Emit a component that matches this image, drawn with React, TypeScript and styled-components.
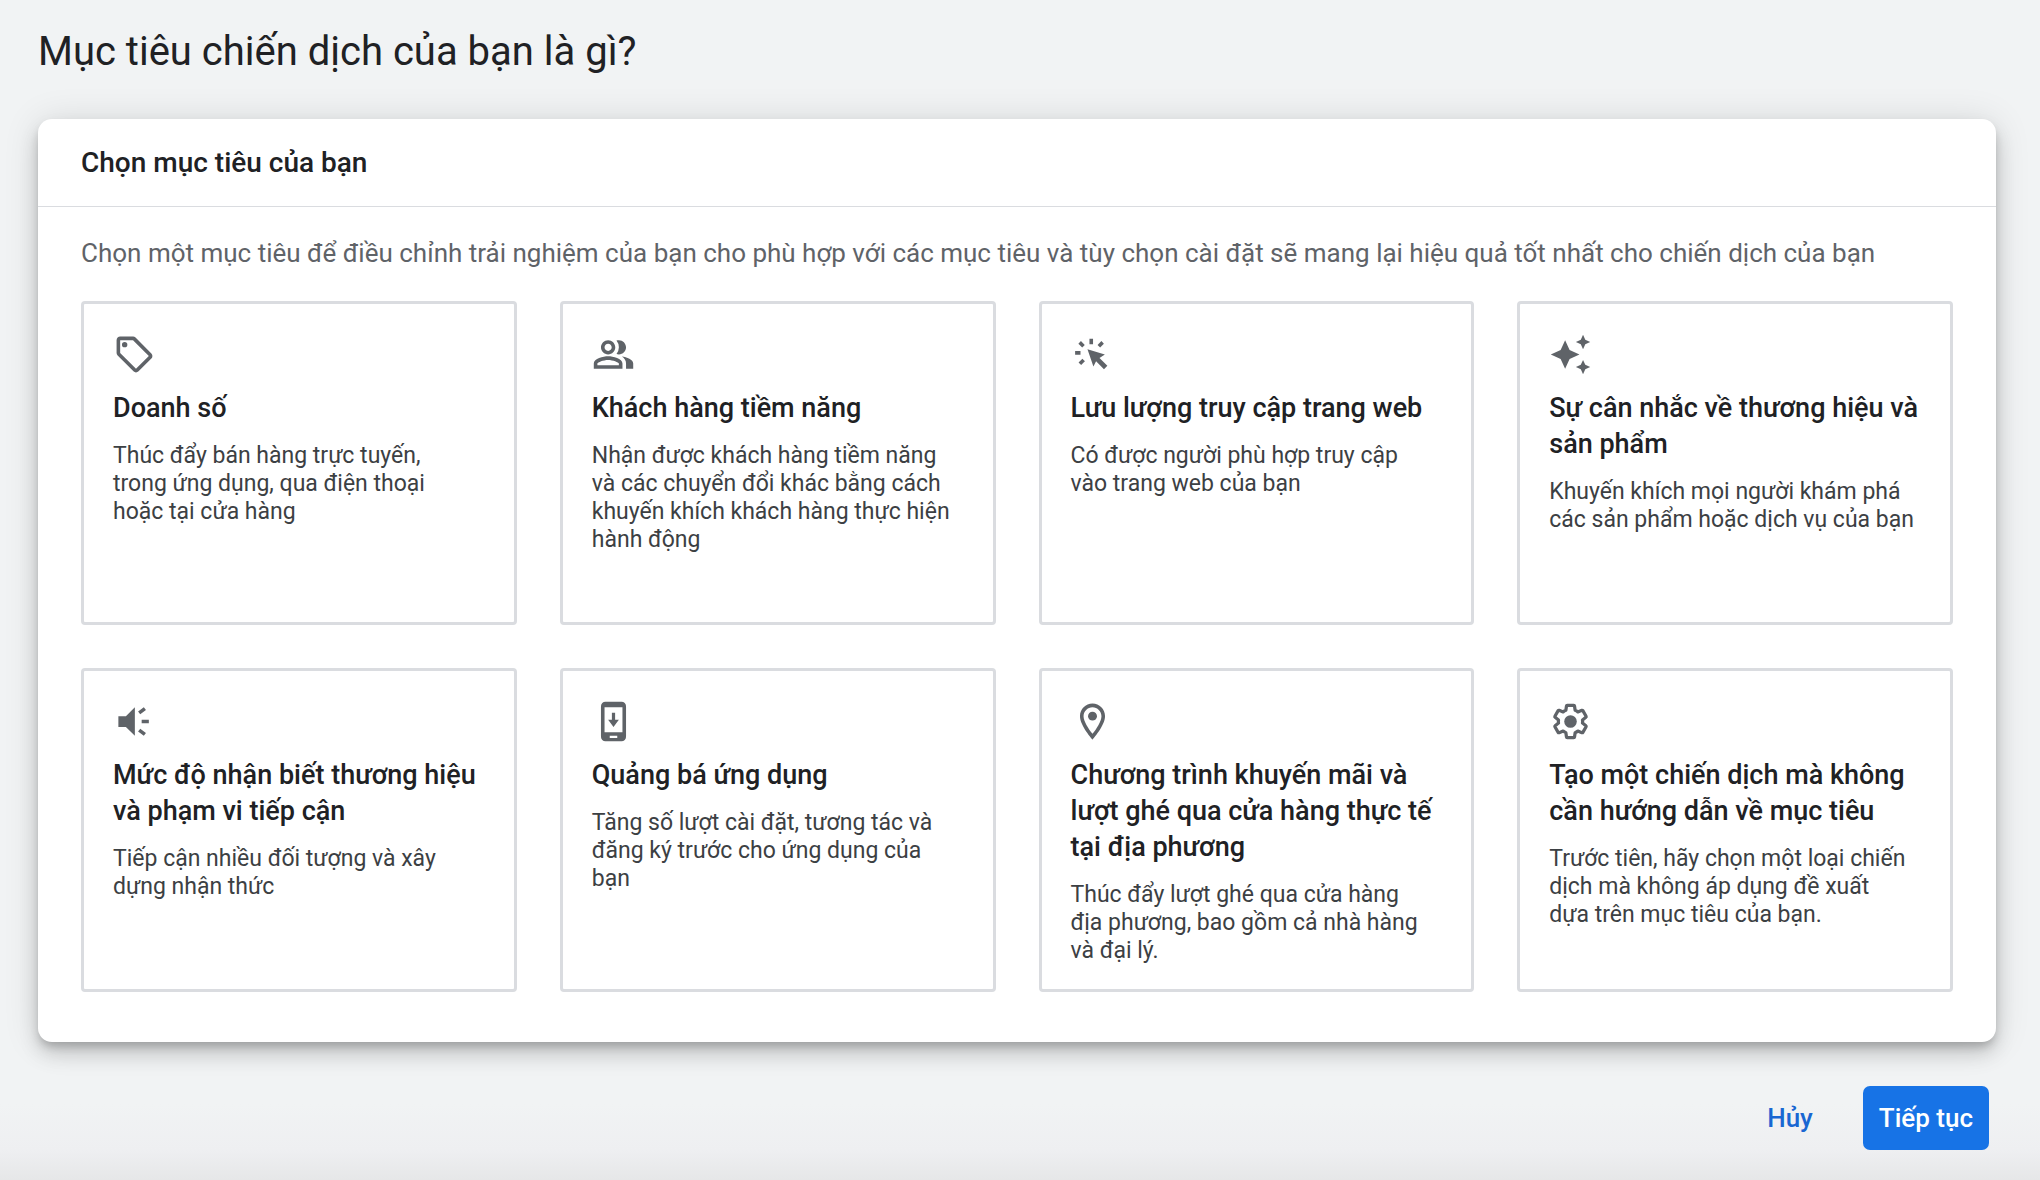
import React from "react";
import styled, { createGlobalStyle } from "styled-components";
import { MdAutoAwesome, MdOutlinePeopleAlt, MdOutlineSell } from "react-icons/md";

const GlobalStyle = createGlobalStyle`
  *, *::before, *::after {
    box-sizing: border-box;
  }
  body {
    margin: 0;
    background: #f1f3f4;
    color: #202124;
    font-family: Roboto, "Noto Sans", sans-serif;
  }
`;

const Page = styled.div`
  display: flex;
  flex-direction: column;
  min-height: 100vh;
  padding: 28px 44px 30px 38px;
  background: linear-gradient(to top, #e6e7e8 0, #eeeff1 30px, #f1f3f4 76px);
`;

const PageTitle = styled.h1`
  margin: 0 0 43px;
  font-size: 40px;
  line-height: 48px;
  font-weight: 400;
`;

const Panel = styled.section`
  border-radius: 14px;
  background: #fff;
  box-shadow:
    0 6px 10px -2px rgba(0, 0, 0, 0.2),
    0 12px 20px 0 rgba(0, 0, 0, 0.14),
    0 2px 36px 0 rgba(0, 0, 0, 0.12);
`;

const PanelHeader = styled.header`
  display: flex;
  align-items: center;
  height: 88px;
  padding: 0 43px;
  border-bottom: 1px solid #dadce0;
`;

const PanelTitle = styled.h2`
  margin: 0;
  font-size: 28px;
  line-height: 36px;
  font-weight: 500;
`;

const PanelBody = styled.div`
  padding: 28px 43px 50px;
`;

const Intro = styled.p`
  margin: 0 0 30px;
  color: #5f6368;
  font-size: 26px;
  line-height: 36px;
`;

const GoalGrid = styled.div`
  display: grid;
  grid-template-columns: repeat(4, minmax(0, 1fr));
  grid-auto-rows: minmax(324px, auto);
  gap: 43px;
`;

const GoalCard = styled.button`
  display: flex;
  flex-direction: column;
  align-items: flex-start;
  padding: 29px 24px 20px 29px;
  border: 3px solid #dadce0;
  border-radius: 4px;
  background: #fff;
  color: #202124;
  font-family: inherit;
  text-align: left;
  cursor: pointer;

  &:hover {
    border-color: #1a73e8;
  }
`;

const IconSlot = styled.span`
  display: flex;
  margin-bottom: 14px;
  color: #5f6368;

  svg {
    width: 43px;
    height: 43px;
  }
`;

const GoalTitle = styled.span`
  margin-bottom: 16px;
  font-size: 27px;
  line-height: 36px;
  font-weight: 500;
`;

const GoalText = styled.span`
  color: #3c4043;
  font-size: 23px;
  line-height: 28px;
  white-space: pre-line;
`;

const Actions = styled.footer`
  display: flex;
  justify-content: flex-end;
  gap: 34px;
  padding-right: 7px;
  margin-top: 44px;
`;

const ActionButton = styled.button<{ $primary?: boolean }>`
  height: 64px;
  padding: 0 16px;
  border: 0;
  border-radius: 7px;
  background: ${(p) => (p.$primary ? "#1773e6" : "transparent")};
  color: ${(p) => (p.$primary ? "#fff" : "#1967d2")};
  font-family: inherit;
  font-size: 26px;
  line-height: 36px;
  font-weight: 500;
  cursor: pointer;
`;

const TrafficIcon = () => (
  <svg viewBox="0 0 24 24" fill="currentColor" aria-hidden="true">
    <path d="M9.2 9.1 18.9 12l-3 1.9 4.4 4.4-1.9 1.9-4.4-4.5-1.5 3z" />
    <path d="M10.3 3.2h2v3.1h-2zM2.3 10.1h3v2h-3z" />
    <rect x="4.4" y="5.3" width="3" height="2" transform="rotate(45 5.9 6.3)" />
    <rect x="15.1" y="5.3" width="3" height="2" transform="rotate(-45 16.6 6.3)" />
    <rect x="4.5" y="15.1" width="3" height="2" transform="rotate(-45 6 16.1)" />
  </svg>
);

const AwarenessIcon = () => (
  <svg viewBox="0 0 24 24" fill="currentColor" aria-hidden="true">
    <path d="M3 9v6h4.200l5 5V4l-5 5z" />
    <path d="M16 11v2h4v-2zM14 17.600l3.200 2.400 1.200-1.600-3.200-2.400zM18.400 5.600 17.200 4 14 6.400 15.200 8z" />
  </svg>
);

const AppIcon = () => (
  <svg viewBox="0 0 24 24" fill="currentColor" aria-hidden="true">
    <path
      fillRule="evenodd"
      d="M7.500 1h9A2.500 2.500 0 0 1 19 3.500v17a2.500 2.500 0 0 1-2.500 2.500h-9A2.500 2.500 0 0 1 5 20.500v-17A2.500 2.500 0 0 1 7.500 1zM7 4v14h10V4zM9.900 20v1.200h4.200V20z"
    />
    <path d="M11.100 7.100h1.800V11H15l-3 4-3-4h2.100z" />
  </svg>
);

const PlaceIcon = () => (
  <svg viewBox="0 0 24 24" fill="currentColor" aria-hidden="true">
    <path
      fillRule="evenodd"
      d="M12 2C8.130 2 5 5.130 5 9c0 5.250 7 13 7 13s7-7.750 7-13c0-3.870-3.130-7-7-7zM7 9c0-2.760 2.240-5 5-5s5 2.240 5 5c0 2.880-2.880 7.190-5 9.880C9.920 16.210 7 11.850 7 9z"
    />
    <circle cx="12" cy="9" r="2.5" />
  </svg>
);

const GearIcon = () => (
  <svg viewBox="0 0 24 24" fill="none" aria-hidden="true">
    <path
      transform="translate(1.200 1.200) scale(0.9)"
      stroke="currentColor"
      strokeWidth="2"
      strokeLinejoin="round"
      d="M19.430 12.980c.04-.32.07-.64.07-.98 0-.34-.03-.66-.07-.98l2.110-1.650c.19-.15.24-.42.12-.64l-2-3.460c-.09-.16-.26-.25-.44-.25-.06 0-.12.01-.17.03l-2.490 1c-.52-.4-1.080-.73-1.690-.98l-.38-2.650C14.460 2.180 14.250 2 14 2h-4c-.25 0-.46.18-.49.42l-.38 2.650c-.61.25-1.170.59-1.690.98l-2.490-1c-.06-.02-.12-.03-.18-.03-.17 0-.34.09-.43.25l-2 3.460c-.13.22-.07.49.12.64l2.110 1.650c-.04.32-.07.65-.07.98 0 .33.03.66.07.98l-2.110 1.650c-.19.15-.24.42-.12.64l2 3.460c.09.16.26.25.44.25.06 0 .12-.01.17-.03l2.490-1c.52.4 1.080.73 1.690.98l.38 2.650c.03.24.24.42.49.42h4c.25 0 .46-.18.49-.42l.38-2.650c.61-.25 1.170-.59 1.690-.98l2.490 1c.06.02.12.03.18.03.17 0 .34-.09.43-.25l2-3.460c.12-.22.07-.49-.12-.64z"
    />
    <circle cx="12" cy="12" r="3.500" fill="currentColor" />
  </svg>
);

const goals = [
  {
    icon: <MdOutlineSell />,
    title: "Doanh số",
    text: "Thúc đẩy bán hàng trực tuyến,\ntrong ứng dụng, qua điện thoại\nhoặc tại cửa hàng",
  },
  {
    icon: <MdOutlinePeopleAlt />,
    title: "Khách hàng tiềm năng",
    text: "Nhận được khách hàng tiềm năng\nvà các chuyển đổi khác bằng cách\nkhuyến khích khách hàng thực hiện\nhành động",
  },
  {
    icon: <TrafficIcon />,
    title: "Lưu lượng truy cập trang web",
    text: "Có được người phù hợp truy cập\nvào trang web của bạn",
  },
  {
    icon: <MdAutoAwesome />,
    title: "Sự cân nhắc về thương hiệu và sản phẩm",
    text: "Khuyến khích mọi người khám phá\ncác sản phẩm hoặc dịch vụ của bạn",
  },
  {
    icon: <AwarenessIcon />,
    title: "Mức độ nhận biết thương hiệu và phạm vi tiếp cận",
    text: "Tiếp cận nhiều đối tượng và xây\ndựng nhận thức",
  },
  {
    icon: <AppIcon />,
    title: "Quảng bá ứng dụng",
    text: "Tăng số lượt cài đặt, tương tác và\nđăng ký trước cho ứng dụng của\nbạn",
  },
  {
    icon: <PlaceIcon />,
    title: "Chương trình khuyến mãi và lượt ghé qua cửa hàng thực tế tại địa phương",
    text: "Thúc đẩy lượt ghé qua cửa hàng\nđịa phương, bao gồm cả nhà hàng\nvà đại lý.",
  },
  {
    icon: <GearIcon />,
    title: "Tạo một chiến dịch mà không cần hướng dẫn về mục tiêu",
    text: "Trước tiên, hãy chọn một loại chiến\ndịch mà không áp dụng đề xuất\ndựa trên mục tiêu của bạn.",
  },
];

export default function App() {
  return (
    <Page>
      <GlobalStyle />
      <PageTitle>Mục tiêu chiến dịch của bạn là gì?</PageTitle>
      <Panel>
        <PanelHeader>
          <PanelTitle>Chọn mục tiêu của bạn</PanelTitle>
        </PanelHeader>
        <PanelBody>
          <Intro>
            Chọn một mục tiêu để điều chỉnh trải nghiệm của bạn cho phù hợp với các mục
            tiêu và tùy chọn cài đặt sẽ mang lại hiệu quả tốt nhất cho chiến dịch của bạn
          </Intro>
          <GoalGrid>
            {goals.map((goal) => (
              <GoalCard key={goal.title} type="button">
                <IconSlot>{goal.icon}</IconSlot>
                <GoalTitle>{goal.title}</GoalTitle>
                <GoalText>{goal.text}</GoalText>
              </GoalCard>
            ))}
          </GoalGrid>
        </PanelBody>
      </Panel>
      <Actions>
        <ActionButton type="button">Hủy</ActionButton>
        <ActionButton type="button" $primary>
          Tiếp tục
        </ActionButton>
      </Actions>
    </Page>
  );
}
